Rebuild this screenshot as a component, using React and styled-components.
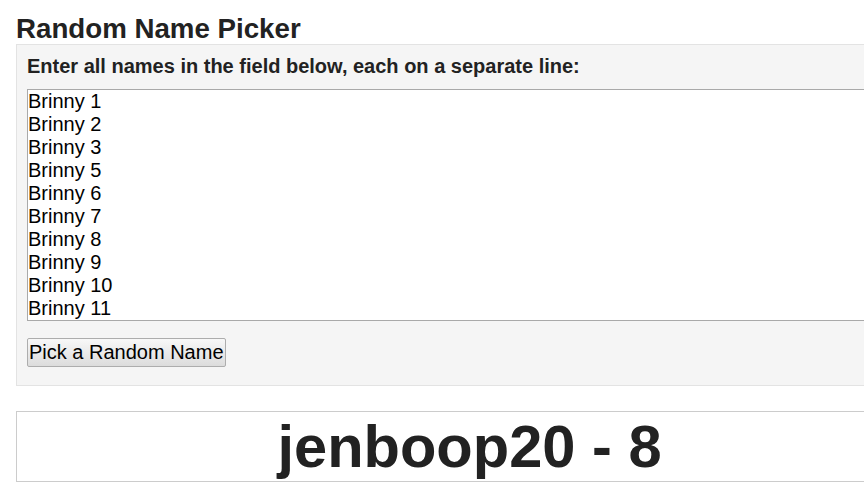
import React, { useState } from 'react';
import styled, { createGlobalStyle } from 'styled-components';

const GlobalStyle = createGlobalStyle`
  html, body {
    margin: 0;
    padding: 0;
    background: #fff;
    overflow: hidden;
  }
  body {
    font-family: "Liberation Sans", Arial, sans-serif;
    color: #222;
  }
`;

const names = [
  'Brinny 1',
  'Brinny 2',
  'Brinny 3',
  'Brinny 5',
  'Brinny 6',
  'Brinny 7',
  'Brinny 8',
  'Brinny 9',
  'Brinny 10',
  'Brinny 11',
  'Brinny 12',
  'Brinny 13',
  'jenboop20',
];

const Page = styled.div`
  width: 907px;
  padding: 0 16px;
`;

const Title = styled.h1`
  margin: 0;
  padding-top: 14px;
  font-size: 27.7px;
  line-height: 30px;
  font-weight: bold;
`;

const Well = styled.div`
  background: #f5f5f5;
  border: 1px solid #e3e3e3;
  padding: 10px 10px 18px;
`;

const Label = styled.label`
  display: block;
  font-size: 20px;
  line-height: 23px;
  font-weight: bold;
  margin-bottom: 11px;
`;

const Names = styled.textarea`
  display: block;
  box-sizing: border-box;
  width: 100%;
  height: 232px;
  margin: 0;
  padding: 0;
  border: 1px solid #a9a9a9;
  font-family: "Liberation Sans", Arial, sans-serif;
  font-size: 20px;
  line-height: 23px;
  color: #000;
  background: #fff;
  resize: none;
  overflow: hidden;
`;

const PickButton = styled.button`
  display: block;
  margin-top: 17px;
  height: 29px;
  padding: 1px 1px;
  border: 1px solid #adadad;
  border-radius: 2px;
  background: linear-gradient(#f8f8f8, #dcdcdc);
  font-family: "Liberation Sans", Arial, sans-serif;
  font-size: 20px;
  line-height: 23px;
  color: #000;
`;

const Result = styled.div`
  margin-top: 25px;
  border: 1px solid #ccc;
  text-align: center;
  font-size: 59.6px;
  line-height: 69px;
  font-weight: bold;
  color: #222;
`;

export default function App() {
  const [text, setText] = useState(names.join('\n'));
  const [picked, setPicked] = useState('jenboop20 - 8');

  const pick = () => {
    const list = text.split('\n').filter((n) => n.trim());
    if (!list.length) return;
    const i = Math.floor(Math.random() * list.length);
    setPicked(`${list[i]} - ${i + 1}`);
  };

  return (
    <>
      <GlobalStyle />
      <Page>
        <Title>Random Name Picker</Title>
        <Well>
          <Label htmlFor="names">Enter all names in the field below, each on a separate line:</Label>
          <Names id="names" value={text} onChange={(e) => setText(e.target.value)} />
          <PickButton onClick={pick}>Pick a Random Name</PickButton>
        </Well>
        <Result>{picked}</Result>
      </Page>
    </>
  );
}
